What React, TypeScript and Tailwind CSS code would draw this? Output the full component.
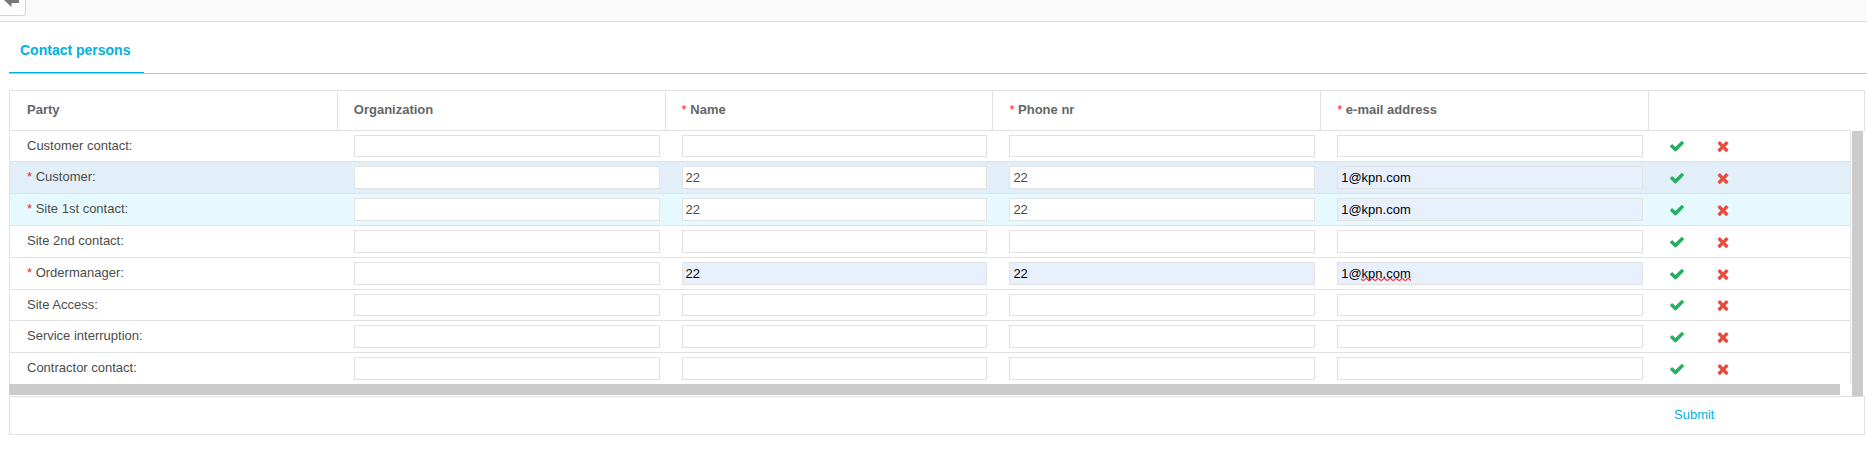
import { useState } from "react";

type Field = "organization" | "name" | "phone" | "email";

interface Contact {
  party: string;
  required?: boolean;
  tone?: string;
  values?: Partial<Record<Field, string>>;
  filled?: Field[];
  misspelled?: Field;
}

const columns: { field: Field; label: string; required?: boolean }[] = [
  { field: "organization", label: "Organization" },
  { field: "name", label: "Name", required: true },
  { field: "phone", label: "Phone nr", required: true },
  { field: "email", label: "e-mail address", required: true },
];

const entered = { name: "22", phone: "22", email: "1@kpn.com" };

const contacts: Contact[] = [
  { party: "Customer contact:" },
  { party: "Customer:", required: true, tone: "bg-[#e2eff8]", values: entered, filled: ["email"] },
  { party: "Site 1st contact:", required: true, tone: "bg-[#e6f9ff]", values: entered, filled: ["email"] },
  { party: "Site 2nd contact:" },
  {
    party: "Ordermanager:",
    required: true,
    values: entered,
    filled: ["name", "phone", "email"],
    misspelled: "email",
  },
  { party: "Site Access:" },
  { party: "Service interruption:" },
  { party: "Contractor contact:" },
];

function Star() {
  return <span className="font-normal text-[#ff1a1a]">* </span>;
}

function CheckIcon() {
  return (
    <svg viewBox="0 0 1792 1792" className="size-4 fill-[#27ae60]" aria-hidden="true">
      <path d="M1671 566q0 40-28 68l-724 724-136 136q-28 28-68 28t-68-28l-136-136-362-362q-28-28-28-68t28-68l136-136q28-28 68-28t68 28l294 295 656-657q28-28 68-28t68 28l136 136q28 28 28 68z" />
    </svg>
  );
}

function CrossIcon() {
  return (
    <svg viewBox="0 0 1792 1792" className="size-4 fill-[#e74c3c]" aria-hidden="true">
      <path d="M1490 1322q0 40-28 68l-136 136q-28 28-68 28t-68-28l-294-294-294 294q-28 28-68 28t-68-28l-136-136q-28-28-28-68t28-68l294-294-294-294q-28-28-28-68t28-68l136-136q28-28 68-28t68 28l294 294 294-294q28-28 68-28t68 28l136 136q28 28 28 68t-28 68l-294 294 294 294q28 28 28 68z" />
    </svg>
  );
}

function Squiggle() {
  return (
    <svg width="50" height="3" className="absolute bottom-1 left-6" aria-hidden="true">
      <defs>
        <pattern id="wave" width="6" height="3" patternUnits="userSpaceOnUse">
          <path d="M0 .7L1.5 2.3H3L4.5.7H6" fill="none" stroke="#ee1c25" strokeWidth="1.1" />
        </pattern>
      </defs>
      <rect width="50" height="3" fill="url(#wave)" />
    </svg>
  );
}

function ContactRow({ contact, first, last }: { contact: Contact; first: boolean; last: boolean }) {
  const [values, setValues] = useState<Partial<Record<Field, string>>>(contact.values ?? {});
  const line = last ? "" : "border-b border-[#e2e2e2]";
  const cell = `${line} ${contact.tone ?? ""}`;
  return (
    <tr className="[&:nth-child(5n+1)_input]:h-[22px]">
      <th scope="row" className={`${cell} border-l border-l-[#e2e2e2] pt-[7px] pl-[17px] text-left align-top font-normal`}>
        {contact.required && <Star />}
        {contact.party}
      </th>
      {columns.map(({ field, label }) => (
        <td key={field} className={`${cell} py-1 pr-[5px] pl-[17px]`}>
          <div className="relative flex">
            <input
              type="text"
              spellCheck={false}
              aria-label={`${contact.party} ${label}`}
              value={values[field] ?? ""}
              onChange={(e) => setValues({ ...values, [field]: e.target.value })}
              className={`h-[23px] w-full min-w-0 border border-[#e2e2e2] px-[3px] outline-none ${
                contact.filled?.includes(field) ? "bg-[#e8f0fe] text-black" : "bg-white text-[#4c4c4c]"
              }`}
            />
            {contact.misspelled === field && <Squiggle />}
          </div>
        </td>
      ))}
      <td className={`${cell} border-r border-r-[#e2e2e2] pl-[21px]`}>
        <div className="flex gap-[30px]">
          <button type="button" aria-label="Save">
            <CheckIcon />
          </button>
          <button type="button" aria-label="Clear">
            <CrossIcon />
          </button>
        </div>
      </td>
      {first && (
        <td
          rowSpan={contacts.length + 1}
          aria-hidden="true"
          className="border-r-2 border-l border-white bg-[#cbcbcb]"
        />
      )}
    </tr>
  );
}

export default function App() {
  return (
    <div className="bg-white font-['Liberation_Sans',Arial,sans-serif] text-[13px] leading-[15px] text-[#4c4c4c]">
      <header className="flex h-[22px] items-start border-b border-[#dcdcdc] bg-[#fafafa]">
        <button
          type="button"
          aria-label="Back"
          className="h-4 w-[26px] overflow-hidden rounded-br-[3px] border-r border-b border-[#d6d6d6] bg-white pl-1"
        >
          <svg width="16" height="15" viewBox="0 0 16 15" aria-hidden="true">
            <path d="M0 0H15V3H7.5V7Z" fill="#777" />
          </svg>
        </button>
      </header>

      <main className="pl-[9px]">
        <nav className="flex border-b border-[#c4c4c4] pt-3">
          <a
            href="#contact-persons"
            className="border-b border-[#00b0df] pt-2 pr-[14px] pb-[14px] pl-[11px] text-[14px] leading-4 font-bold text-[#00b0df]"
          >
            Contact persons
          </a>
        </nav>

        <div className="pt-4 pr-0.5">
          <table className="w-full table-fixed border-separate border-spacing-0">
            <colgroup>
              <col />
              <col />
              <col />
              <col />
              <col />
              <col className="w-[203px]" />
              <col className="w-[14px]" />
            </colgroup>
            <thead className="text-left text-[#666]">
              <tr>
                <th scope="col" className="h-[41px] border-y border-l border-[#e2e2e2] pb-0.5 pl-[17px] font-bold">
                  Party
                </th>
                {columns.map(({ field, label, required }) => (
                  <th key={field} scope="col" className="border-y border-l border-[#e2e2e2] pb-0.5 pl-4 font-bold">
                    {required && <Star />}
                    {label}
                  </th>
                ))}
                <td className="border-y border-l border-[#e2e2e2]" />
                <td className="border-t border-r border-[#e2e2e2]" />
              </tr>
            </thead>
            <tbody>
              {contacts.map((contact, i) => (
                <ContactRow
                  key={contact.party}
                  contact={contact}
                  first={i === 0}
                  last={i === contacts.length - 1}
                />
              ))}
              <tr aria-hidden="true">
                <td colSpan={6} className="h-3 pr-[11px] align-top">
                  <div className="h-[11px] bg-[#cbcbcb]" />
                </td>
              </tr>
            </tbody>
            <tfoot>
              <tr>
                <td colSpan={5} className="h-[39px] border-y border-l border-[#e2e2e2]" />
                <td colSpan={2} className="border-y border-r border-[#e2e2e2] pb-0.5 pl-[26px]">
                  <button type="submit" className="text-[#00b0df]">
                    Submit
                  </button>
                </td>
              </tr>
            </tfoot>
          </table>
        </div>
      </main>
    </div>
  );
}
